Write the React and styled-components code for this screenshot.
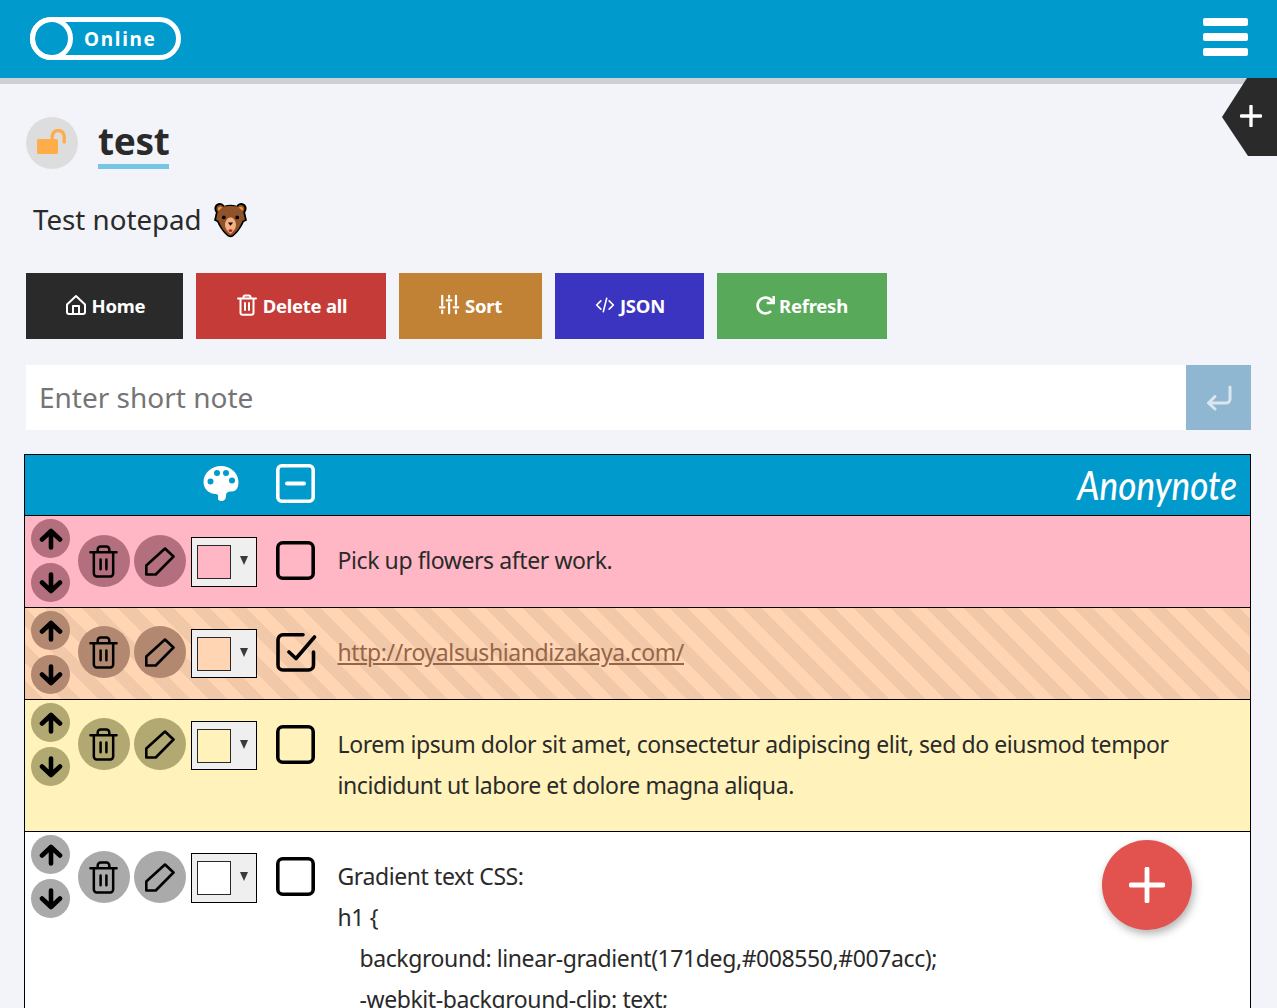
import React from "react";
import styled, { createGlobalStyle, css } from "styled-components";
import { FaRedo } from "react-icons/fa";

const FONT = `"Noto Sans", "Open Sans", sans-serif`;

const Global = createGlobalStyle`
  html, body { margin: 0; padding: 0; height: 100%; overflow: hidden; background: #f2f4f9; }
  body { font-family: ${FONT}; color: #2a2a2a; }
  * { box-sizing: border-box; }
`;

const Page = styled.div`
  position: relative;
  height: 1008px;
  overflow: hidden;
`;

const TopBar = styled.header`
  height: 84px;
  background: #009acd;
  border-bottom: 6px solid #cdd0d4;
  padding: 17px 29px 0 30px;
  display: flex;
  justify-content: space-between;
  align-items: flex-start;
`;

const Toggle = styled.div`
  width: 151px;
  height: 43px;
  border: 5px solid #fff;
  border-radius: 22px;
  display: flex;
  align-items: center;
`;

const Knob = styled.span`
  width: 43px;
  height: 43px;
  margin-left: -5px;
  border: 5px solid #fff;
  border-radius: 50%;
  flex: none;
`;

const ToggleLabel = styled.span`
  margin-left: 11px;
  color: #fff;
  font-size: 19px;
  font-weight: 700;
  letter-spacing: 1.7px;
`;

const Burger = styled.div`
  display: flex;
  flex-direction: column;
  gap: 7px;
  padding-top: 1px;
`;

const BurgerLine = styled.span`
  display: block;
  width: 45px;
  height: 8px;
  border-radius: 2px;
  background: #fff;
`;

const CornerTab = styled.div`
  position: absolute;
  right: 0;
  top: 78px;
  width: 55px;
  height: 78px;
  background: #2a2a2a;
  clip-path: polygon(25px 0, 55px 0, 55px 78px, 26px 78px, 0 39px);
  display: flex;
  align-items: center;
  justify-content: flex-end;
  padding: 0 15px 2px 0;
`;

const Main = styled.main`
  padding: 33px 26px 0;
`;

const TitleRow = styled.div`
  display: flex;
  align-items: flex-start;
  gap: 20px;
  height: 52px;
`;

const LockBadge = styled.div`
  width: 52px;
  height: 52px;
  border-radius: 50%;
  background: #ddd;
  display: flex;
  align-items: center;
  justify-content: center;
  padding-bottom: 3px;
`;

const Title = styled.h1`
  margin: 0;
  height: 52px;
  font-size: 37px;
  line-height: 47px;
  font-weight: 700;
  letter-spacing: -0.35px;
  color: #2a2a2a;
  border-bottom: 5px solid #74c6e4;
`;

const Description = styled.div`
  display: flex;
  align-items: center;
  gap: 10px;
  height: 36px;
  margin: 32px 0 0 7px;
  font-size: 27.700px;
  color: #2a2a2a;
`;

const ButtonRow = styled.div`
  display: flex;
  gap: 13px;
  margin-top: 36px;
`;

const ActionButton = styled.button`
  width: ${(p) => p.$w}px;
  height: 66px;
  border: 0;
  padding: 0 0 2px;
  background: ${(p) => p.$bg};
  color: #fff;
  font-family: ${FONT};
  font-size: 18.500px;
  font-weight: 700;
  letter-spacing: -0.25px;
  display: flex;
  align-items: center;
  justify-content: center;
  gap: 4px;
`;

const InputRow = styled.div`
  display: flex;
  height: 65px;
  margin-top: 26px;
`;

const NoteInput = styled.input`
  flex: 1;
  min-width: 0;
  border: 0;
  background: #fff;
  padding: 0 13px 2px;
  font-family: ${FONT};
  font-size: 28px;
  outline: none;
  &::placeholder { color: #757575; opacity: 1; }
`;

const EnterButton = styled.button`
  width: 65px;
  border: 0;
  padding: 0;
  background: #90b7d2;
  display: flex;
  align-items: center;
  justify-content: center;
`;

const Board = styled.section`
  margin: 24px 0 0 -2px;
  border: 1px solid #000;
  border-bottom: 0;
`;

const BoardHead = styled.div`
  height: 61px;
  background: #009acd;
  border-bottom: 1px solid #000;
  display: flex;
  align-items: center;
  padding: 0 0 4px 178px;
`;

const HeadMinus = styled.span`
  margin-left: 37px;
  display: flex;
`;

const Logo = styled.span`
  margin: 2px 13px 0 auto;
  color: #fff;
  font-family: "Lato", sans-serif;
  font-style: italic;
  font-weight: 500;
  font-size: 35px;
  line-height: 1;
  transform: scaleY(1.15);
`;

const stripes = css`
  background: repeating-linear-gradient(45deg, #f2c9a8 0 13px, #ffd5b3 13px 26px);
`;

const Row = styled.article`
  min-height: ${(p) => p.$h}px;
  background: ${(p) => p.$bg};
  ${(p) => p.$done && stripes}
  border-bottom: 1px solid #000;
  display: flex;
  align-items: flex-start;
  padding: 3px 0 0 6px;
`;

const Arrows = styled.div`
  display: flex;
  flex-direction: column;
  gap: 5px;
  width: 39px;
  flex: none;
`;

const Round = styled.button`
  width: ${(p) => p.$d}px;
  height: ${(p) => p.$d}px;
  flex: none;
  border: 0;
  padding: 0;
  border-radius: 50%;
  background: ${(p) => p.$c};
  display: flex;
  align-items: center;
  justify-content: center;
`;

const RowTools = styled.div`
  display: flex;
  gap: 4px;
  margin: ${(p) => p.$drop}px 0 0 8px;
`;

const Swatch = styled.div`
  width: 66px;
  height: ${(p) => p.$h}px;
  flex: none;
  margin: ${(p) => 18 - p.$drop}px 0 0 1px;
  border: 1px solid #000;
  background: #efefef;
  display: flex;
  align-items: center;
  padding-left: 5px;
`;

const SwatchColor = styled.span`
  width: 34px;
  height: 34px;
  border: 1px solid #2a2a2a;
  background: ${(p) => p.$c};
`;

const Caret = styled.span`
  width: 0;
  height: 0;
  margin: -3px 0 0 9px;
  border-left: 4.500px solid transparent;
  border-right: 4.500px solid transparent;
  border-top: 9px solid #3a3a3a;
`;

const Check = styled.span`
  display: flex;
  margin: 22px 0 0 19px;
  flex: none;
`;

const Text = styled.div`
  margin: 21px 0 0 22.500px;
  padding-right: 60px;
  font-size: 23px;
  line-height: 41px;
  color: #2a2a2a;
  letter-spacing: -0.41px;
`;

const Indented = styled.div`
  padding-left: 22px;
`;

const NoteLink = styled.a`
  color: #95654a;
  text-decoration: underline;
`;

const Fab = styled.button`
  position: absolute;
  left: 1102px;
  top: 840px;
  width: 90px;
  height: 90px;
  border: 0;
  padding: 0;
  border-radius: 50%;
  background: #e2534f;
  box-shadow: 2px 4px 8px rgba(0, 0, 0, 0.3);
  display: flex;
  align-items: center;
  justify-content: center;
`;

const Plus = ({ size, width, color = "#fff" }) => (
  <svg width={size} height={size} viewBox="0 0 36 36" fill="none">
    <path d="M18 2v32M2 18h32" stroke={color} strokeWidth={width} strokeLinecap="round" />
  </svg>
);

const Lock = () => (
  <svg width="30" height="25" viewBox="0 0 30 25" fill="none">
    <rect x="0" y="10" width="21" height="15" rx="1.500" fill="#ffac4a" />
    <path d="M15.200 10V7.500a6 6 0 0 1 12 0V13" stroke="#ffac4a" strokeWidth="3.400" strokeLinecap="round" />
  </svg>
);

const Bear = () => (
  <svg width="37" height="37" viewBox="0 0 36 36">
    <path d="M3 4.500C5 1 10 1 12 4.500 15.500 3.300 20.500 3.300 24 4.500 26 1 31 1 33 4.500 34.500 7.500 33 10 32.200 11L34 19l-3 1.500C28 27 24 32 20.500 34.500 19 35.500 17 35.500 15.500 34.500 12 32 8 27 5 20.500L2 19l1.800-8C3 10 1.500 7.500 3 4.500Z" fill="#000" />
    <path d="M4.800 5.500C6.500 3.300 9.700 3.500 11 5.500 14.500 4.700 21.500 4.700 25 5.500 26.300 3.500 29.500 3.300 31.200 5.500 32.300 7.500 31.200 9.500 30.300 10.500L32 18l-2.500 1.500C27 26 23.500 30.500 20 33 18.800 33.800 17.200 33.800 16 33 12.500 30.500 9 26 6.500 19.500L4 18l1.700-7.500C4.800 9.500 3.700 7.500 4.800 5.500Z" fill="#8f5229" />
    <path d="M6 6.500C7.200 5.200 9 5.300 10 6.500 8.700 7.200 7.600 8.300 6.800 9.500 5.900 8.800 5.600 7.500 6 6.500ZM30 6.500C28.800 5.200 27 5.300 26 6.500 27.300 7.200 28.400 8.300 29.200 9.500 30.100 8.800 30.400 7.500 30 6.500Z" fill="#f5933f" />
    <path d="M18 16c-2.800 0-4.500 2.500-5.200 6-.6 3.500 1.500 7.500 5.200 10 3.700-2.500 5.800-6.500 5.200-10-.7-3.500-2.400-6-5.200-6Z" fill="#f4b184" />
    <circle cx="11.500" cy="16" r="1.800" fill="#000" />
    <circle cx="24.500" cy="16" r="1.800" fill="#000" />
    <path d="M15.500 21h5L18 24Z" fill="#000" />
    <path d="M16 28c1.300-.8 2.700-.8 4 0 0 1.500-1 2.400-2 2.400s-2-.9-2-2.400Z" fill="#c4202f" />
  </svg>
);

const Tiny = ({ children, w = 24, h = 24, vb = "0 0 24 24", sw = 2 }) => (
  <svg width={w} height={h} viewBox={vb} fill="none" stroke="#fff" strokeWidth={sw} strokeLinecap="round" strokeLinejoin="round">
    {children}
  </svg>
);

const HomeIcon = () => (
  <Tiny>
    <path d="M3 11.500 12 3l9 8.500V19a2 2 0 0 1-2 2H5a2 2 0 0 1-2-2Z" />
    <path d="M9 21v-8h6v8" />
  </Tiny>
);

const TrashSmall = () => (
  <Tiny>
    <path d="M3 5.500h18M8.500 5.500V4a1.500 1.500 0 0 1 1.500-1.500h4A1.500 1.500 0 0 1 15.500 4v1.500M5.500 5.500V20a1.800 1.800 0 0 0 1.800 1.800h9.400a1.800 1.800 0 0 0 1.800-1.800V5.500M10 10v7M14 10v7" />
  </Tiny>
);

const SlidersIcon = () => (
  <Tiny w={22} h={22} sw={2.400}>
    <path d="M3.500 2v10M3.500 18v3M11 2v2M11 10v11M18.500 2v10M18.500 18v3M1 14.500h5M8.500 7h5M16 14.500h5" />
  </Tiny>
);

const CodeIcon = () => (
  <Tiny w={22} h={20}>
    <path d="M7 7l-5 5 5 5M17 7l5 5-5 5M14 4l-4 16" />
  </Tiny>
);

const EnterIcon = () => (
  <svg width="26" height="26" viewBox="0 0 26 26" fill="none" stroke="#dce6ee" strokeWidth="3" strokeLinecap="round" strokeLinejoin="round">
    <path d="M24 2v12a4 4 0 0 1-4 4H3M9 11.500 2.500 18 9 24" />
  </svg>
);

const Palette = () => (
  <svg width="36" height="36" viewBox="0 0 36 36">
    <path fillRule="evenodd" fill="#fff" d="M18 1C8.500 1 0.500 8 0.500 17c0 9 8.500 12 11.500 12 3 0 3.500 1.500 3 3.500-.5 2 .7 3.500 3.500 3.500 2.500 0 4.500-1.500 4.500-5 0-3.500 2-4.500 5-4.500 3 0 7.500-1 7.500-9.500C35.500 8 27.500 1 18 1ZM7.500 19.500a3 3 0 1 0 0-6 3 3 0 0 0 0 6ZM14 11a3 3 0 1 0 0-6 3 3 0 0 0 0 6ZM23 11a3 3 0 1 0 0-6 3 3 0 0 0 0 6ZM29 18.500a3 3 0 1 0 0-6 3 3 0 0 0 0 6Z" />
  </svg>
);

const MinusBox = () => (
  <svg width="39" height="39" viewBox="0 0 39 39" fill="none" stroke="#fff" strokeWidth="3.600" strokeLinecap="round">
    <rect x="1.800" y="1.800" width="35.400" height="35.400" rx="4" />
    <path d="M11 19.500h17" strokeWidth="4" />
  </svg>
);

const ArrowUp = () => (
  <svg width="24" height="22" viewBox="0 0 24 22" fill="none" stroke="#000" strokeWidth="4.600" strokeLinecap="round" strokeLinejoin="round">
    <path d="M12 19.500V3M3 11.500 12 3l9 8.500" />
  </svg>
);

const ArrowDown = () => (
  <svg width="24" height="22" viewBox="0 0 24 22" fill="none" stroke="#000" strokeWidth="4.600" strokeLinecap="round" strokeLinejoin="round">
    <path d="M12 2.500V19M3 10.500 12 19l9-8.500" />
  </svg>
);

const TrashIcon = () => (
  <svg width="29" height="33" viewBox="0 0 30 34" fill="none" stroke="#000" strokeWidth="2.600" strokeLinecap="round" strokeLinejoin="round" style={{ marginLeft: -1 }}>
    <path d="M1.500 7.500h27M9 7.500V4.500A3 3 0 0 1 12 1.500h6a3 3 0 0 1 3 3v3M5 7.500v22a3 3 0 0 0 3 3h14a3 3 0 0 0 3-3v-22M12 15v10M18 15v10" />
  </svg>
);

const PencilIcon = () => (
  <svg width="30" height="29" viewBox="0 0 30 29" fill="none" stroke="#000" strokeWidth="2.600" strokeLinejoin="round">
    <path d="M20 1.500 28.500 9.500 10.700 27.500H1.300V18.500Z" />
  </svg>
);

const Box = () => (
  <svg width="39" height="39" viewBox="0 0 39 39" fill="none" stroke="#000" strokeWidth="3.600">
    <rect x="1.800" y="1.800" width="35.400" height="35.400" rx="5" />
  </svg>
);

const BoxChecked = () => (
  <svg width="41" height="39" viewBox="0 0 41 39" fill="none" stroke="#000" strokeWidth="3.600" strokeLinecap="round" strokeLinejoin="round" style={{ marginRight: -2 }}>
    <path d="M27 1.800H7a5 5 0 0 0-5 5V32a5 5 0 0 0 5 5h25.500a5 5 0 0 0 5-5V19M13 19l7 6.500L38.500 4" />
  </svg>
);

const notes = [
  {
    id: 1, bg: "#ffb7c5", tool: "#b36f7d", h: 91, drop: 16, sw: 50,
    body: <div>Pick up flowers after work.</div>,
  },
  {
    id: 2, bg: "#ffd5b3", tool: "#b28870", h: 91, drop: 15, sw: 49, done: true,
    body: <NoteLink href="#">http://royalsushiandizakaya.com/</NoteLink>,
  },
  {
    id: 3, bg: "#fff3bb", tool: "#b2a972", h: 131, drop: 15, sw: 49,
    body: (
      <>
        <div>Lorem ipsum dolor sit amet, consectetur adipiscing elit, sed do eiusmod tempor</div>
        <div>incididunt ut labore et dolore magna aliqua.</div>
      </>
    ),
  },
  {
    id: 4, bg: "#ffffff", tool: "#aaaaaa", h: 200, drop: 16, sw: 50,
    body: (
      <>
        <div>Gradient text CSS:</div>
        <div>h1 {"{"}</div>
        <Indented>background: linear-gradient(171deg,#008550,#007acc);</Indented>
        <Indented>-webkit-background-clip: text;</Indented>
        <Indented>-webkit-text-fill-color: transparent;</Indented>
        <div>{"}"}</div>
      </>
    ),
  },
];

export default function App() {
  return (
    <Page>
      <Global />
      <TopBar>
        <Toggle>
          <Knob />
          <ToggleLabel>Online</ToggleLabel>
        </Toggle>
        <Burger>
          <BurgerLine />
          <BurgerLine />
          <BurgerLine />
        </Burger>
      </TopBar>
      <CornerTab>
        <Plus size={22} width={5.500} />
      </CornerTab>
      <Main>
        <TitleRow>
          <LockBadge>
            <Lock />
          </LockBadge>
          <Title>test</Title>
        </TitleRow>
        <Description>
          Test notepad <Bear />
        </Description>
        <ButtonRow>
          <ActionButton $w={157} $bg="#2a2a2a"><HomeIcon /> Home</ActionButton>
          <ActionButton $w={190} $bg="#c43b37"><TrashSmall /> Delete all</ActionButton>
          <ActionButton $w={143} $bg="#c28236"><SlidersIcon /> Sort</ActionButton>
          <ActionButton $w={149} $bg="#3b34c0"><CodeIcon /> JSON</ActionButton>
          <ActionButton $w={170} $bg="#58aa5a"><FaRedo size={19} /> Refresh</ActionButton>
        </ButtonRow>
        <InputRow>
          <NoteInput placeholder="Enter short note" />
          <EnterButton><EnterIcon /></EnterButton>
        </InputRow>
        <Board>
          <BoardHead>
            <Palette />
            <HeadMinus><MinusBox /></HeadMinus>
            <Logo>Anonynote</Logo>
          </BoardHead>
          {notes.map((n) => (
            <Row key={n.id} $bg={n.bg} $h={n.h + 1} $done={n.done}>
              <Arrows>
                <Round $d={39} $c={n.tool}><ArrowUp /></Round>
                <Round $d={39} $c={n.tool}><ArrowDown /></Round>
              </Arrows>
              <RowTools $drop={n.drop}>
                <Round $d={52} $c={n.tool}><TrashIcon /></Round>
                <Round $d={52} $c={n.tool}><PencilIcon /></Round>
                <Swatch $h={n.sw} $drop={n.drop}>
                  <SwatchColor $c={n.bg} />
                  <Caret />
                </Swatch>
              </RowTools>
              <Check>{n.done ? <BoxChecked /> : <Box />}</Check>
              <Text>{n.body}</Text>
            </Row>
          ))}
        </Board>
      </Main>
      <Fab><Plus size={36} width={4.800} /></Fab>
    </Page>
  );
}
